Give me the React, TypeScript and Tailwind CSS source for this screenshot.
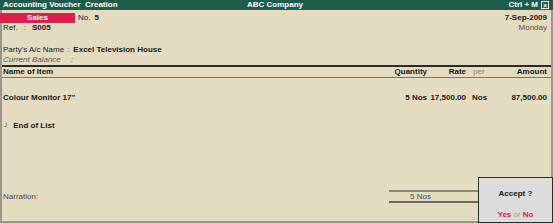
export default function App() {
  return (
    <div
      className="relative flex h-[223px] w-[553px] flex-col overflow-hidden bg-[#e4dcc1] text-[8px] leading-[10px] text-[#1a1a1a]"
      style={{ fontFamily: '"Liberation Sans", Arial, sans-serif' }}
    >
      {/* title bar */}
      <div className="flex h-[10px] items-center bg-[#1d5b4b] pl-[3px] pr-[4px] font-bold text-white">
        <span className="w-[244px]">Accounting Voucher&nbsp; Creation</span>
        <span className="flex-1">ABC Company</span>
        <span className="mr-[3px]">Ctrl + M</span>
        <span className="flex h-[8px] w-[8px] items-center justify-center border border-white text-[7px] leading-none">
          ×
        </span>
      </div>

      <div className="flex flex-1 flex-col border-b-2 border-l-2 border-r-2 border-[#9a9688]">
        {/* voucher head */}
        <div className="mt-[3px] flex">
          <div className="flex flex-col">
            <div className="flex items-center">
              <span className="-ml-[2px] flex h-[10px] w-[75px] items-center justify-center bg-[#dc1f4f] font-bold text-white">
                Sales
              </span>
              <span className="ml-[3px]">No.</span>
              <span className="ml-[4px] font-bold">5</span>
            </div>
            <div className="ml-[1px] flex h-[10px] items-center">
              <span>Ref.</span>
              <span className="ml-[6px] text-[#666]">:</span>
              <span className="ml-[6px] font-bold">S005</span>
            </div>
          </div>
          <div className="ml-auto flex flex-col items-end pr-[4px]">
            <span className="font-bold">7-Sep-2009</span>
            <span className="text-[#6a4a52]">Monday</span>
          </div>
        </div>

        {/* party */}
        <div className="ml-[1px] mt-[12px] flex h-[10px] items-center">
          <span>Party&apos;s A/c Name</span>
          <span className="ml-[3px] text-[#666]">:</span>
          <span className="ml-[4px] font-bold">Excel Television House</span>
        </div>
        <div className="ml-[1px] flex h-[10px] items-center italic text-[#555]">
          <span>Current Balance</span>
          <span className="ml-[10px]">:</span>
        </div>

        {/* column header */}
        <div className="flex h-[13px] items-center border-b border-t-2 border-b-[#7a7668] border-t-[#2a2a2a] pr-[4px] font-bold">
          <span className="ml-[1px] flex-1">Name of Item</span>
          <span className="w-[50px] text-right">Quantity</span>
          <span className="w-[39px] text-right">Rate</span>
          <span className="ml-[7px] w-[20px] font-normal text-[#8a8478]">per</span>
          <span className="w-[54px] text-right">Amount</span>
        </div>

        {/* item row */}
        <div className="mt-[15px] flex h-[10px] items-center pr-[4px] font-bold">
          <span className="ml-[1px] flex-1">Colour Monitor 17&quot;</span>
          <span className="w-[50px] text-right">5 Nos</span>
          <span className="w-[39px] text-right">17,500.00</span>
          <span className="ml-[6px] w-[21px]">Nos</span>
          <span className="w-[54px] text-right">87,500.00</span>
        </div>

        <div className="ml-[2px] mt-[18px] flex h-[10px] items-center font-bold">
          <span className="text-[6px] leading-none">┘</span>
          <span className="ml-[5px]">End of List</span>
        </div>

        {/* narration */}
        <div className="mt-auto mb-[18px] flex items-center">
          <span className="ml-[1px] flex-1 text-[#5a3f46]">Narration:</span>
          <div className="mr-[73px] flex w-[89px] flex-col">
            <div className="h-[2px] bg-[#8d8676]" />
            <div className="flex h-[9px] items-center pl-[21px] text-[#4a4a4a]">5 Nos</div>
            <div className="h-[2px] bg-[#6e6a60]" />
          </div>
        </div>
      </div>

      {/* accept dialog */}
      <div className="absolute bottom-0 right-0 flex h-[46px] w-[75px] flex-col items-center border border-[#2b2b2b] bg-[#dcdcda]">
        <span className="mt-[11px] font-bold">Accept ?</span>
        <span className="mt-auto mb-[2px] font-bold">
          <span className="text-[#dc1f4f]">Yes</span>
          <span className="font-normal text-[#9a9a9a]"> or </span>
          <span className="text-[#dc1f4f]">No</span>
        </span>
      </div>
    </div>
  );
}
